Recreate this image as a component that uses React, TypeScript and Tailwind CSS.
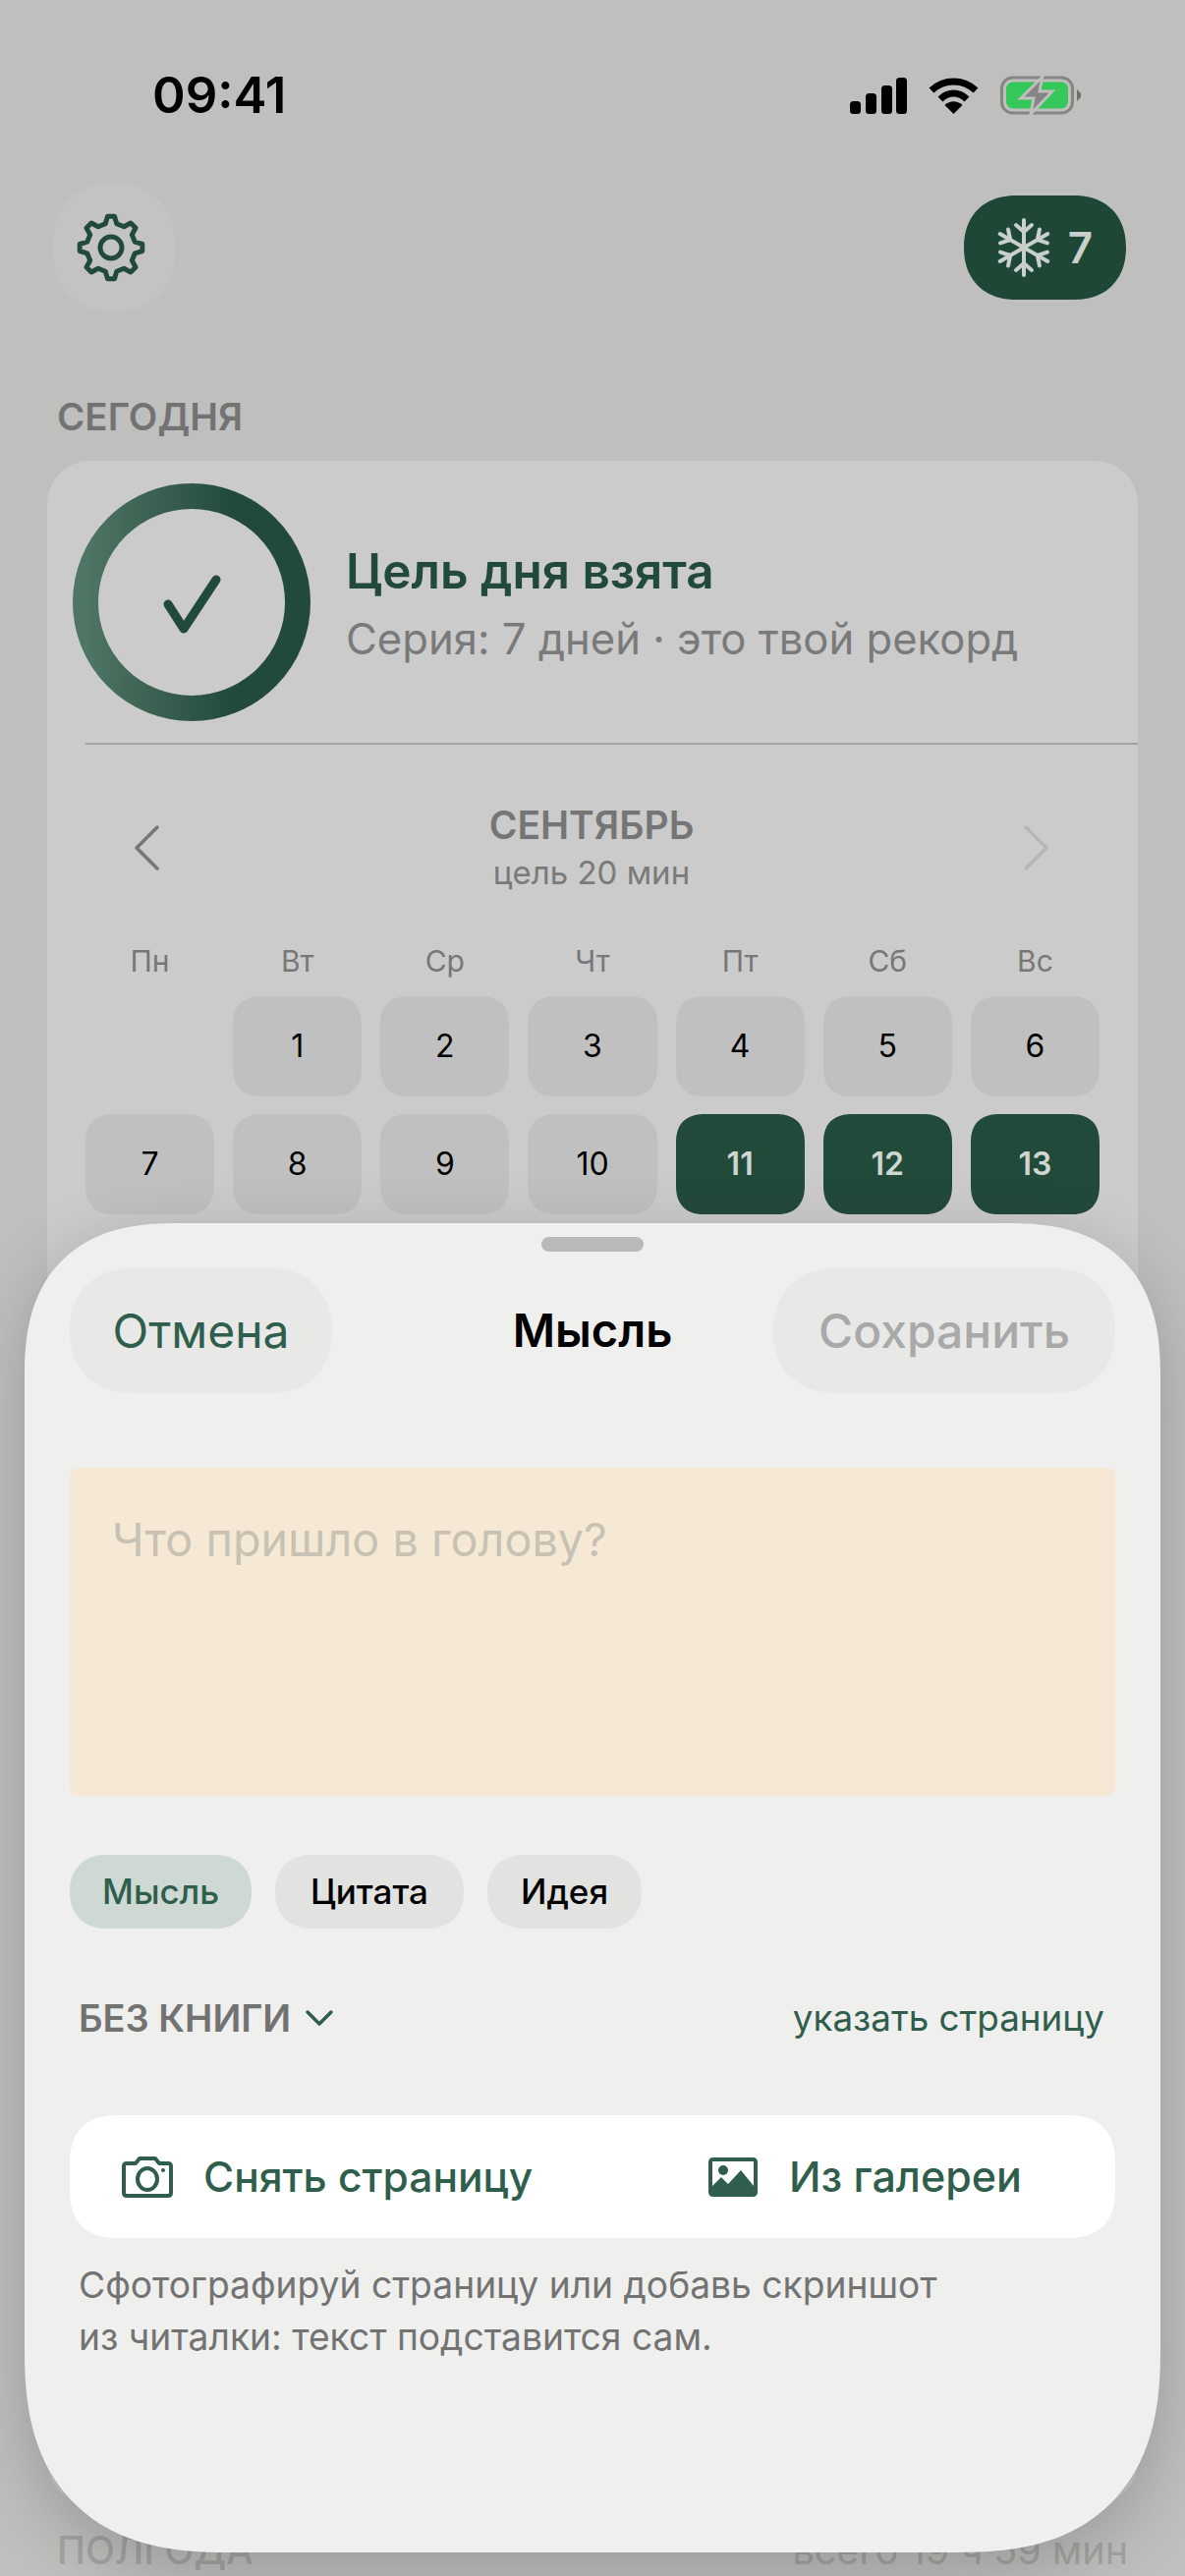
import React from "react";

const weekdays = ["Пн", "Вт", "Ср", "Чт", "Пт", "Сб", "Вс"];
const days = [0, 1, 2, 3, 4, 5, 6, 7, 8, 9, 10, 11, 12, 13];

function gearPath() {
    const teeth = 8;
    const pts: string[] = [];
    for (let i = 0; i < teeth; i++) {
        const a = (i * 2 * Math.PI) / teeth - Math.PI / 2;
        const step = (2 * Math.PI) / teeth;
        const corners = [
            [a - step * 0.3, 25],
            [a - step * 0.14, 32],
            [a + step * 0.14, 32],
            [a + step * 0.3, 25],
        ];
        corners.forEach(([t, r]) => {
            pts.push((36 + r * Math.cos(t)).toFixed(1) + " " + (36 + r * Math.sin(t)).toFixed(1));
        });
    }
    return "M" + pts.join("L") + "Z";
}

function StatusIcons() {
    return (
        <div className="flex items-center gap-[22px]">
            <svg width="58" height="37" viewBox="0 0 58 37" fill="#000">
                <rect x="0" y="24" width="11" height="13" rx="3.5" />
                <rect x="16" y="16" width="11" height="21" rx="3.5" />
                <rect x="32" y="8" width="11" height="29" rx="3.5" />
                <rect x="47" y="0" width="11" height="37" rx="3.5" />
            </svg>
            <svg width="51" height="37" viewBox="0 0 51 37" fill="none" stroke="#000" strokeWidth="7">
                <path d="M3 13 C16 1 35 1 48 13" />
                <path d="M12 22 C20 14 31 14 39 22" />
                <path d="M25.5 37 L16.5 28 C22 23 29 23 34.5 28 Z" fill="#000" stroke="none" />
            </svg>
            <svg width="82" height="40" viewBox="0 0 82 40" fill="none">
                <rect x="1.5" y="2" width="72" height="36" rx="11" stroke="#858583" strokeWidth="3" />
                <rect x="6" y="6.5" width="63" height="27" rx="7" fill="#34c759" />
                <path d="M78 14 L82 18 V22 L78 26 Z" fill="#6f6f6d" />
                <path d="M43 1 L21 23 H34 L31 39 L53 16 H40 Z" fill="#858583" stroke="#bfbfbd" strokeWidth="3" />
            </svg>
        </div>
    );
}

function SnowIcon() {
    return (
        <svg width="54" height="60" viewBox="0 0 54 60" fill="none" stroke="#c9d0cc" strokeWidth="4" strokeLinecap="round" strokeLinejoin="round">
            {[0, 60, 120, 180, 240, 300].map((r) => (
                <g key={r} transform={"rotate(" + r + " 27 30)"}>
                    <path d="M27 30 V2" />
                    <path d="M19 7 L27 14 L35 7" />
                </g>
            ))}
        </svg>
    );
}

function DayCell({ day }: { day: number }) {
    if (!day) return <div />;
    const done = day >= 11;
    return (
        <div
            className={
                "h-[102px] rounded-[30px] [corner-shape:superellipse(1.3)] flex items-center justify-center text-[32px] " +
                (done ? "bg-[#224a3a] text-[#cfd6d2] font-semibold" : "bg-[#c0c0c0] text-black")
            }
        >
            {day}
        </div>
    );
}

export default function App() {
    return (
        <div className="relative w-[1206px] h-[2622px] overflow-hidden bg-[#bfbfbd] font-['Inter',sans-serif]">
            <div className="flex items-center justify-between pt-[70px] pl-[155px] pr-[106px] h-[124px]">
                <span className="text-[51px] leading-[54px] font-semibold text-black">09:41</span>
                <StatusIcons />
            </div>

            <div className="flex items-center justify-between pl-[54px] pr-[60px] mt-[63px]">
                <div className="w-[124px] h-[130px] rounded-[62px] [corner-shape:superellipse(1.15)] bg-[#c3c3c1] flex items-center justify-center pr-[6px]">
                    <svg width="72" height="72" viewBox="0 0 72 72" fill="none" stroke="#214a39" strokeWidth="5" strokeLinejoin="round">
                        <path d={gearPath()} />
                        <circle cx="36" cy="36" r="11" />
                    </svg>
                </div>
                <div className="w-[165px] h-[106px] rounded-[53px] [corner-shape:superellipse(1.15)] bg-[#1f4735] flex items-center justify-center gap-[18px] text-[#c9d0cc]">
                    <SnowIcon />
                    <span className="text-[44px] font-semibold">7</span>
                </div>
            </div>

            <p className="ml-[58px] mt-[84px] text-[38.5px] leading-[46px] font-semibold text-[#737373]">СЕГОДНЯ</p>

            <div className="mx-[48px] mt-[22px] h-[2080px] rounded-[44px] bg-[#cbcbcb] pt-[23px]">
                <div className="flex items-center gap-[36px] pl-[26px]">
                    <svg width="242" height="242" viewBox="0 0 242 242" fill="none">
                        <defs>
                            <linearGradient id="ring" x1="0" y1="0" x2="1" y2="0">
                                <stop offset="0" stopColor="#4f7564" />
                                <stop offset="0.7" stopColor="#224a3a" />
                            </linearGradient>
                        </defs>
                        <circle cx="121" cy="121" r="108" stroke="url(#ring)" strokeWidth="26" />
                        <path d="M97 123 L113 148 L146 98" stroke="#224a3a" strokeWidth="9" strokeLinecap="round" strokeLinejoin="round" />
                    </svg>
                    <div className="flex flex-col gap-[14px] mt-[4px]">
                        <p className="text-[49.5px] leading-[58px] font-semibold text-[#224a3a]">Цель дня взята</p>
                        <p className="text-[43.6px] leading-[54px] text-[#7a7a7a]">Серия: 7 дней · это твой рекорд</p>
                    </div>
                </div>

                <div className="ml-[39px] mt-[22px] h-[2px] bg-[#a2a2a2]" />

                <div className="flex items-center justify-between pl-[71px] pr-[73px] mt-[59px]">
                    <svg width="60" height="60" viewBox="0 0 60 60" fill="none" stroke="#777" strokeWidth="3.5" strokeLinecap="round" strokeLinejoin="round">
                        <path d="M41 9 L20 30 L41 51" />
                    </svg>
                    <div className="flex flex-col items-center">
                        <span className="text-[39px] leading-[46px] font-semibold text-[#757575]">СЕНТЯБРЬ</span>
                        <span className="mt-[5px] text-[33px] leading-[40px] text-[#7a7a7a]">цель 20 мин</span>
                    </div>
                    <svg width="60" height="60" viewBox="0 0 60 60" fill="none" stroke="#b6b6b6" strokeWidth="3.5" strokeLinecap="round" strokeLinejoin="round">
                        <path d="M19 9 L40 30 L19 51" />
                    </svg>
                </div>

                <div className="px-[39px]">
                    <div className="grid grid-cols-7 gap-x-[19px] mt-[52px]">
                        {weekdays.map((w) => (
                            <span key={w} className="text-center text-[30px] leading-[36px] text-[#777]">
                                {w}
                            </span>
                        ))}
                    </div>
                    <div className="grid grid-cols-7 gap-x-[19px] gap-y-[18px] mt-[18px]">
                        {days.map((d) => (
                            <DayCell key={d} day={d} />
                        ))}
                    </div>
                </div>
            </div>

            <div className="flex items-center justify-between px-[58px] mt-[24px] text-[#a4a4a2]">
                <span className="text-[39px] leading-[46px] font-medium">ПОЛГОДА</span>
                <span className="text-[39.5px] leading-[46px]">всего 19 ч 59 мин</span>
            </div>

            {/* sheet over the dimmed page */}
            <div className="absolute left-[25px] top-[1245px] w-[1156px] h-[1353px] bg-[#efefed] rounded-t-[155px] rounded-b-[205px] [corner-shape:superellipse(1.3)] shadow-[0_20px_70px_rgba(0,0,0,0.2)] px-[46px]">
                <div className="w-[104px] h-[15px] rounded-full bg-[#b9b9b7] mx-auto mt-[14px]" />

                <div className="flex items-center mt-[17px]">
                    <div className="flex-1">
                        <div className="w-[267px] h-[127px] rounded-[64px] [corner-shape:superellipse(1.15)] bg-[#e8e8e6] flex items-center justify-center text-[48px] text-[#2f5f4c]">
                            Отмена
                        </div>
                    </div>
                    <span className="text-[47px] font-semibold text-black">Мысль</span>
                    <div className="flex-1 flex justify-end">
                        <div className="w-[348px] h-[127px] rounded-[64px] [corner-shape:superellipse(1.15)] bg-[#e8e8e6] flex items-center justify-center text-[48px] font-medium text-[#a9a9a9]">
                            Сохранить
                        </div>
                    </div>
                </div>

                <div className="mt-[76px] h-[334px] rounded-[8px] bg-[#f5e9d6] px-[43px] pt-[45px]">
                    <p className="text-[46.7px] leading-[56px] text-[#c8c2b5]">Что пришло в голову?</p>
                </div>

                <div className="flex gap-[24px] mt-[60px]">
                    <div className="w-[185px] h-[75px] rounded-[38px] [corner-shape:superellipse(1.15)] bg-[#ced9d3] flex items-center justify-center text-[35px] font-medium text-[#2f5f4c]">
                        Мысль
                    </div>
                    <div className="w-[192px] h-[75px] rounded-[38px] [corner-shape:superellipse(1.15)] bg-[#e2e2e0] flex items-center justify-center text-[35px] font-medium text-black">
                        Цитата
                    </div>
                    <div className="w-[157px] h-[75px] rounded-[38px] [corner-shape:superellipse(1.15)] bg-[#e2e2e0] flex items-center justify-center text-[35px] font-medium text-black">
                        Идея
                    </div>
                </div>

                <div className="flex items-center justify-between pl-[9px] pr-[11px] mt-[68px] h-[46px]">
                    <div className="flex items-center gap-[14px]">
                        <span className="text-[38px] font-semibold text-[#727272]">БЕЗ КНИГИ</span>
                        <svg width="30" height="18" viewBox="0 0 30 18" fill="none" stroke="#2f5f4c" strokeWidth="3.5" strokeLinecap="round" strokeLinejoin="round">
                            <path d="M3 3 L15 15 L27 3" />
                        </svg>
                    </div>
                    <span className="text-[36.8px] text-[#2f5f4c]">указать страницу</span>
                </div>

                <div className="flex items-center mt-[76px] h-[125px] rounded-[50px] [corner-shape:superellipse(1.3)] bg-white text-[#2f5f4c] pl-[53px]">
                    <div className="flex items-center gap-[31px] w-[597px]">
                        <svg width="52" height="42" viewBox="0 0 52 42" fill="none" stroke="currentColor" strokeWidth="4" strokeLinejoin="round">
                            <path d="M5 7 H14 L18 2 H34 L38 7 H47 Q50 7 50 10 V37 Q50 40 47 40 H5 Q2 40 2 37 V10 Q2 7 5 7 Z" />
                            <ellipse cx="26" cy="23" rx="10" ry="11" />
                            <circle cx="42" cy="14" r="2" fill="currentColor" stroke="none" />
                        </svg>
                        <span className="text-[42.5px] font-medium">Снять страницу</span>
                    </div>
                    <div className="flex items-center gap-[32px]">
                        <svg width="50" height="40" viewBox="0 0 50 40" fill="currentColor">
                            <path d="M5 0 H45 Q50 0 50 5 V35 Q50 40 45 40 H5 Q0 40 0 35 V5 Q0 0 5 0 Z M4 4 V29 L13 20 L20 27 L33 13 L46 29 V4 Z" fillRule="evenodd" />
                            <circle cx="15" cy="13" r="5" />
                        </svg>
                        <span className="text-[43px] font-medium">Из галереи</span>
                    </div>
                </div>

                <p className="ml-[9px] mt-[21px] text-[37.2px] leading-[53px] text-[#737373]">
                    Сфотографируй страницу или добавь скриншот
                    <br />
                    из читалки: текст подставится сам.
                </p>
            </div>
        </div>
    );
}
